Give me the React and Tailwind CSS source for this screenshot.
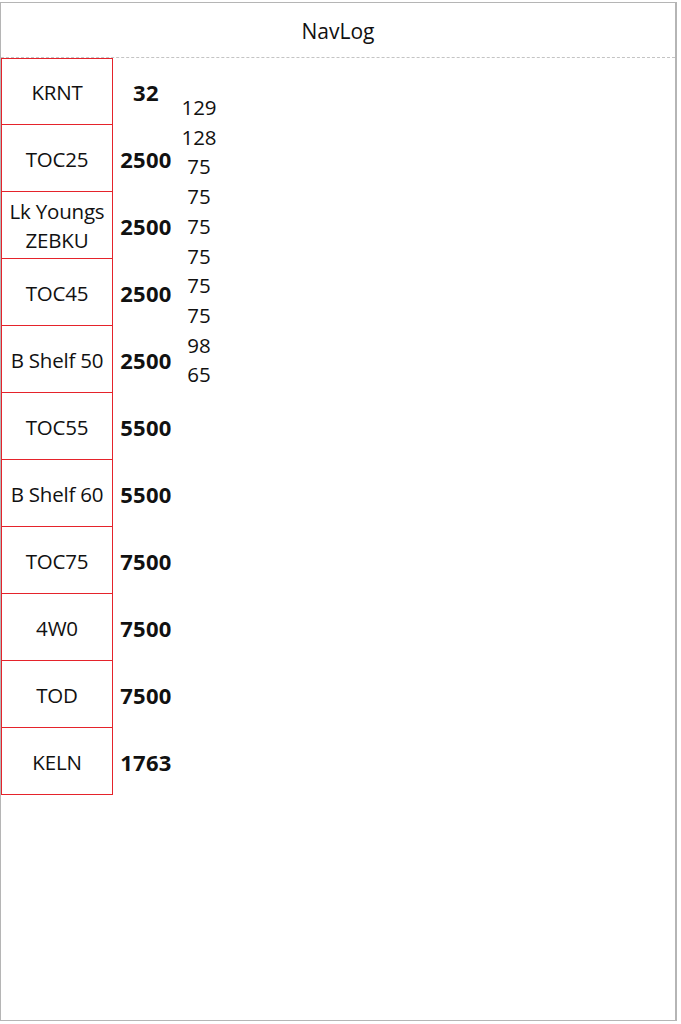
const stops = [
    { name: 'KRNT', alt: '32' },
    { name: 'TOC25', alt: '2500' },
    { name: 'Lk Youngs ZEBKU', alt: '2500' },
    { name: 'TOC45', alt: '2500' },
    { name: 'B Shelf 50', alt: '2500' },
    { name: 'TOC55', alt: '5500' },
    { name: 'B Shelf 60', alt: '5500' },
    { name: 'TOC75', alt: '7500' },
    { name: '4W0', alt: '7500' },
    { name: 'TOD', alt: '7500' },
    { name: 'KELN', alt: '1763' },
];

const legs = ['129', '128', '75', '75', '75', '75', '75', '75', '98', '65'];

const App = () => {
    return (
        <div className="w-[681px] h-[1024px] bg-white pt-[2px] pb-[3px] pr-[4px]" style={{ fontFamily: '"Open Sans", "Noto Sans", sans-serif' }}>
            <div className="h-full border border-[#b5b5b5] border-r-2 flex flex-col text-[#111]">
                <div className="h-[55px] pt-[3px] flex items-center justify-center text-[21px] border-b border-dashed border-[#c4c4c4]">
                    NavLog
                </div>
                <div className="flex">
                    <div className="w-[112px] flex flex-col">
                        {stops.map((s, i) => (
                            <div
                                key={i}
                                className={`h-[67px] pt-[2px] flex items-center justify-center text-center text-[20.5px] leading-[29px] tracking-[-0.2px] border-x border-b-[1.5px] border-[#e5232b] ${i === 0 ? 'border-t' : ''} ${i === 0 || i === stops.length - 1 ? 'border-[#e86a6e]' : ''}`}
                            >
                                {s.name}
                            </div>
                        ))}
                    </div>
                    <div className="w-[66px] flex flex-col">
                        {stops.map((s, i) => (
                            <div key={i} className="h-[67px] pt-[2px] flex items-center justify-center text-[22px] font-bold tracking-[0.3px]">
                                {s.alt}
                            </div>
                        ))}
                    </div>
                    <div className="w-[40px] pt-[35px] flex flex-col text-[20.5px] leading-[29.7px] text-center">
                        {legs.map((l, i) => (
                            <div key={i}>{l}</div>
                        ))}
                    </div>
                </div>
            </div>
        </div>
    );
};

export default App;
